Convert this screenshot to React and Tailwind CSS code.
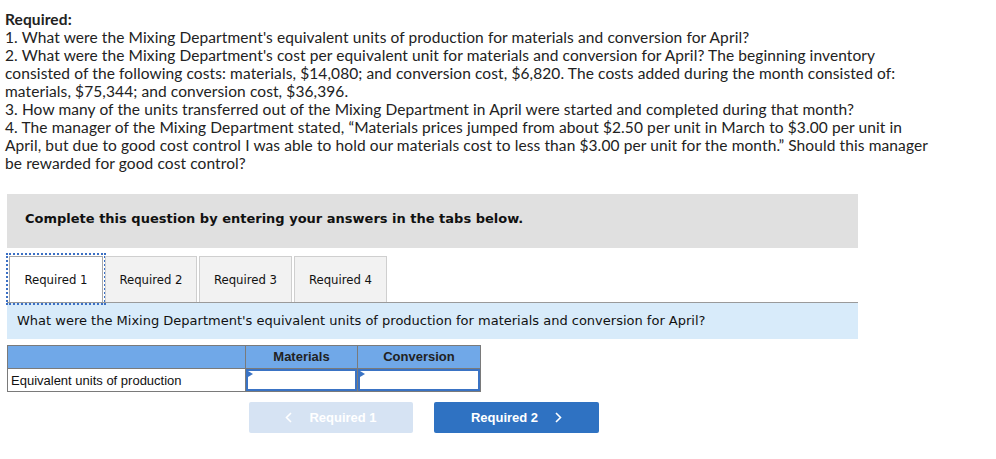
import React from "react";

const main = { fontFamily: "Lato, 'Open Sans', sans-serif" };
const verd = { fontFamily: "'DejaVu Sans', Verdana, sans-serif" };
const tah = { fontFamily: "'DejaVu Sans Condensed', 'DejaVu Sans', Tahoma, sans-serif" };
const arial = { fontFamily: "'Liberation Sans', Arial, sans-serif" };

function InputCell({ w }) {
  return (
    <div className={`relative h-full border-l border-[#7a7a7a] ${w} p-0`}>
      <div className="relative h-full border-2 border-[#3a73c4] bg-white">
        <span className="absolute left-0 top-0 w-0 h-0 border-t-[3px] border-b-[3px] border-l-[5px] border-t-transparent border-b-transparent border-l-[#3a73c4]" />
      </div>
    </div>
  );
}

export default function App() {
  const lines = [
    "1. What were the Mixing Department's equivalent units of production for materials and conversion for April?",
    "2. What were the Mixing Department's cost per equivalent unit for materials and conversion for April? The beginning inventory",
    "consisted of the following costs: materials, $14,080; and conversion cost, $6,820. The costs added during the month consisted of:",
    "materials, $75,344; and conversion cost, $36,396.",
    "3. How many of the units transferred out of the Mixing Department in April were started and completed during that month?",
    "4. The manager of the Mixing Department stated, \u201cMaterials prices jumped from about $2.50 per unit in March to $3.00 per unit in",
    "April, but due to good cost control I was able to hold our materials cost to less than $3.00 per unit for the month.\u201d Should this manager",
    "be rewarded for good cost control?",
  ];
  const tabCls = "h-[46px] border border-b-0 flex items-center justify-center text-[13px] text-[#111]";
  return (
    <div className="w-[996px] h-[459px] bg-white overflow-hidden">
      <div className="pl-[5px] pt-[10px] text-[15.5px] leading-[18px] tracking-[0.1px] text-[#222]" style={main}>
        <div className="font-bold">Required:</div>
        {lines.map((l, i) => (
          <div key={i} className="whitespace-nowrap">{l}</div>
        ))}
      </div>

      <div className="ml-[7px] w-[851px] mt-[22px]">
        <div className="h-[54px] bg-[#e0e0e0] flex items-center pl-[18px] pb-[4px]">
          <span className="text-[13px] font-bold text-[#111]" style={verd}>
            Complete this question by entering your answers in the tabs below.
          </span>
        </div>

        <div className="mt-[8px] h-[47px] border-b border-[#9a9a9a] flex items-end pl-[2px] gap-[2px]" style={tah}>
          <div className={`${tabCls} w-[94px] bg-white border-[#a8a8a8] outline-2 outline-dotted outline-[#3a6fc4] outline-offset-[1px]`}>
            Required 1
          </div>
          <div className={`${tabCls} w-[92px] bg-[#f2f2f2] border-[#cfcfcf]`}>Required 2</div>
          <div className={`${tabCls} w-[93px] bg-[#f2f2f2] border-[#cfcfcf]`}>Required 3</div>
          <div className={`${tabCls} w-[93px] bg-[#f2f2f2] border-[#cfcfcf]`}>Required 4</div>
        </div>

        <div className="h-[36px] bg-[#d8ebfa] flex items-center pl-[10px]" style={verd}>
          <span className="text-[13px] text-[#111]">
            What were the Mixing Department's equivalent units of production for materials and conversion for April?
          </span>
        </div>

        <div className="mt-[6px] w-[474px] border border-[#7a7a7a]" style={arial}>
          <div className="flex h-[23px] bg-[#70a8e8] border-b border-[#7a7a7a] text-[13px] font-bold text-[#222]">
            <div className="w-[237px]" />
            <div className="w-[112px] border-l border-[#7a7a7a] flex items-center justify-center">Materials</div>
            <div className="flex-1 border-l border-[#7a7a7a] flex items-center justify-center">Conversion</div>
          </div>
          <div className="flex h-[22px] text-[13px] text-[#111]">
            <div className="w-[237px] flex items-center pl-[3px] pt-[1px]">Equivalent units of production</div>
            <InputCell w="w-[112px]" />
            <InputCell w="flex-1" />
          </div>
        </div>

        <div className="mt-[10px] flex pl-[242px] gap-[21px]" style={arial}>
          <div className="w-[164px] h-[31px] rounded-[2px] bg-[#d6e3f3] flex items-center justify-center gap-[17px] text-white font-bold text-[13px]">
            <svg width="7" height="11" viewBox="0 0 7 11" fill="none" stroke="white" strokeWidth="1.6"><path d="M6 1L1.5 5.5L6 10" /></svg>
            <span>Required 1</span>
          </div>
          <div className="w-[165px] h-[31px] rounded-[2px] bg-[#2f72c2] flex items-center justify-center gap-[17px] text-white font-bold text-[13px]">
            <span>Required 2</span>
            <svg width="7" height="11" viewBox="0 0 7 11" fill="none" stroke="white" strokeWidth="1.6"><path d="M1 1L5.5 5.5L1 10" /></svg>
          </div>
        </div>
      </div>
    </div>
  );
}
